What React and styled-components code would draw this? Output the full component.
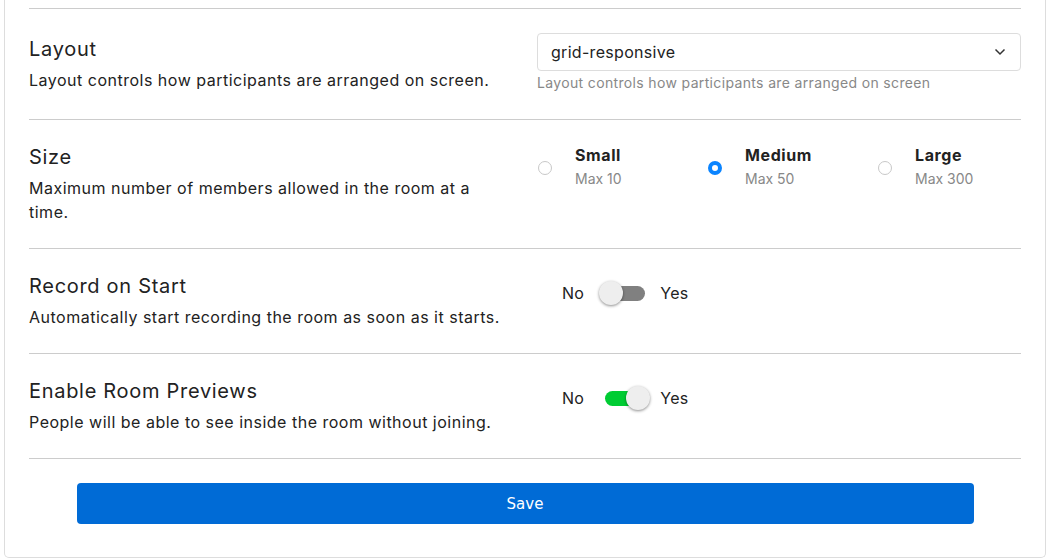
import styled, { createGlobalStyle } from 'styled-components'

const GlobalStyle = createGlobalStyle`
    body {
        margin: 0;
        background: #fff;
        font-family: Inter, "Open Sans", sans-serif;
        color: #222;
    }
`

const sizes = [
    { label: 'Small', sub: 'Max 10', checked: false },
    { label: 'Medium', sub: 'Max 50', checked: true },
    { label: 'Large', sub: 'Max 300', checked: false },
]

const App = () => {
    return (
        <Page>
            <GlobalStyle />
            <Card>
                <Row>
                    <Info $offset={3}>
                        <Title>Layout</Title>
                        <Desc>Layout controls how participants are arranged on screen.</Desc>
                    </Info>
                    <Control>
                        <Select>
                            <span>grid-responsive</span>
                            <svg width="12" height="8" viewBox="0 0 12 8">
                                <path d="M1.5 1.5 L6 6 L10.5 1.5" fill="none" stroke="#333" strokeWidth="1.5" />
                            </svg>
                        </Select>
                        <Helper>Layout controls how participants are arranged on screen</Helper>
                    </Control>
                </Row>
                <Row>
                    <Info>
                        <Title>Size</Title>
                        <Desc>Maximum number of members allowed in the room at a time.</Desc>
                    </Info>
                    <RadioGroup>
                        {sizes.map((s) => (
                            <RadioOption key={s.label}>
                                <Radio $checked={s.checked} />
                                <RadioText>
                                    <RadioLabel>{s.label}</RadioLabel>
                                    <RadioSub>{s.sub}</RadioSub>
                                </RadioText>
                            </RadioOption>
                        ))}
                    </RadioGroup>
                </Row>
                <Row>
                    <Info>
                        <Title>Record on Start</Title>
                        <Desc>Automatically start recording the room as soon as it starts.</Desc>
                    </Info>
                    <ToggleRow>
                        <ToggleText>No</ToggleText>
                        <Track $on={false}><Knob $on={false} /></Track>
                        <ToggleText>Yes</ToggleText>
                    </ToggleRow>
                </Row>
                <Row>
                    <Info>
                        <Title>Enable Room Previews</Title>
                        <Desc>People will be able to see inside the room without joining.</Desc>
                    </Info>
                    <ToggleRow>
                        <ToggleText>No</ToggleText>
                        <Track $on={true}><Knob $on={true} /></Track>
                        <ToggleText>Yes</ToggleText>
                    </ToggleRow>
                </Row>
                <Footer>
                    <SaveButton>Save</SaveButton>
                </Footer>
            </Card>
        </Page>
    )
}

export default App

//styled components

const Page = styled.div`
    padding: 0 6px 2px 4px;
`

const Card = styled.div`
    border: 1px solid #ddd;
    border-top: none;
    border-radius: 0 0 5px 5px;
    padding: 8px 24px 0 24px;
`

const Row = styled.div`
    display: grid;
    grid-template-columns: 484px 484px;
    column-gap: 24px;
    align-items: start;
    padding: 24px 0 24px;
    border-top: 1px solid #ccc;
`

const Info = styled.div`
    display: flex;
    flex-direction: column;
    padding-top: ${(p) => p.$offset || 0}px;
`

const Title = styled.div`
    font-size: 20px;
    letter-spacing: 0.7px;
    line-height: 26px;
    color: #222;
    margin-bottom: 6px;
`

const Desc = styled.div`
    font-size: 16px;
    letter-spacing: 0.5px;
    line-height: 24px;
    color: #222;
`

const Control = styled.div`
    display: flex;
    flex-direction: column;
    padding-bottom: 2px;
`

const Select = styled.div`
    height: 38px;
    box-sizing: border-box;
    border: 1px solid #ddd;
    border-radius: 4px;
    display: flex;
    align-items: center;
    justify-content: space-between;
    padding: 0 14px 0 13px;
    font-size: 16px;
    letter-spacing: 0.3px;
    color: #222;
`

const Helper = styled.div`
    margin-top: 2px;
    font-size: 14px;
    letter-spacing: 0.35px;
    line-height: 20px;
    color: #888;
`

const RadioGroup = styled.div`
    display: grid;
    grid-template-columns: repeat(3, 170px);
    align-items: start;
`

const RadioOption = styled.div`
    display: flex;
    align-items: center;
    gap: 23px;
    padding-left: 1px;
`

const Radio = styled.span`
    width: 14px;
    height: 14px;
    box-sizing: border-box;
    border-radius: 50%;
    border: ${(p) => (p.$checked ? '4px solid #0a84ff' : '1px solid #c8c8c8')};
    background: #fff;
    flex-shrink: 0;
`

const RadioText = styled.div`
    display: flex;
    flex-direction: column;
    margin-top: -1px;
`

const RadioLabel = styled.div`
    font-size: 16px;
    font-weight: 700;
    letter-spacing: 0.6px;
    line-height: 24px;
    color: #222;
`

const RadioSub = styled.div`
    font-size: 14px;
    line-height: 24px;
    color: #888;
`

const ToggleRow = styled.div`
    display: flex;
    align-items: center;
    height: 40px;
    padding-left: 25px;
`

const ToggleText = styled.span`
    font-size: 16px;
    letter-spacing: 0.3px;
    color: #222;
`

const Track = styled.div`
    position: relative;
    width: 40px;
    height: 15px;
    border-radius: 8px;
    background: ${(p) => (p.$on ? '#00cc33' : '#808080')};
    margin: 0 15px 0 21px;
`

const Knob = styled.span`
    position: absolute;
    top: 50%;
    left: ${(p) => (p.$on ? '21px' : '-6px')};
    width: 24px;
    height: 24px;
    margin-top: -12px;
    border-radius: 50%;
    background: #eee;
    box-shadow: 0 1px 3px rgba(0, 0, 0, 0.45);
`

const Footer = styled.div`
    border-top: 1px solid #ccc;
    padding: 24px 0 33px;
    display: flex;
    justify-content: center;
`

const SaveButton = styled.button`
    width: 897px;
    height: 41px;
    border: none;
    border-radius: 4px;
    background: #006bd6;
    color: #fff;
    font-family: "DejaVu Sans", sans-serif;
    font-size: 15px;
    cursor: pointer;
`
